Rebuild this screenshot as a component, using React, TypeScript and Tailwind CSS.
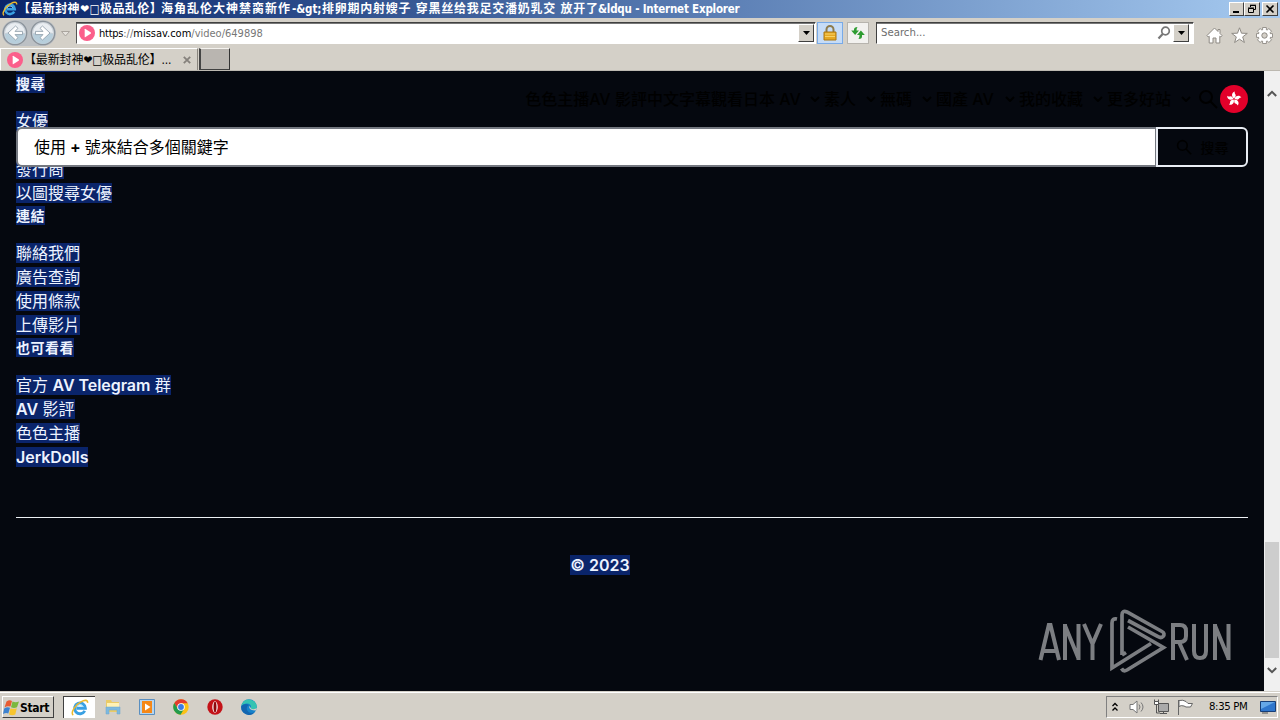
import React from 'react';

const TAHOMA = "font-['DejaVu_Sans_Condensed','DejaVu_Sans','Noto_Sans_CJK_SC',sans-serif] [font-stretch:condensed]";
const raised = 'border border-t-white border-l-white border-r-[#404040] border-b-[#404040] bg-[#d4d0c8]';

function PlayLogo() {
  return (
    <svg className="h-4 w-4 shrink-0" viewBox="0 0 16 16">
      <circle cx="8" cy="8" r="8" fill="#fb5f8b" />
      <path d="M5.7 4.2Q5.7 3.4 6.5 3.9L11.6 7.2Q12.5 8 11.6 8.7L6.5 12.1Q5.7 12.5 5.7 11.7Z" fill="#fff" />
    </svg>
  );
}

function IeLogo({ className }: { className: string }) {
  return (
    <svg className={className} viewBox="0 0 20 20">
      <path d="M15.3 13.2A6 6 0 1 1 16 10.3H6" fill="none" stroke="#3aa0e2" strokeWidth="3.2" />
      <path d="M6.3 9.2A3.9 3.9 0 0 1 13.8 9" fill="none" stroke="#8fd8fb" strokeWidth="1.1" />
      <path d="M2.5 18C-1 15.2 5 6.2 11 3.2C15 .9 18.7.7 18.4 4.3" fill="none" stroke="#edb92c" strokeWidth="1.7" />
    </svg>
  );
}

function NavCircle({ flip }: { flip?: boolean }) {
  return (
    <svg className="h-[26px] w-[26px]" viewBox="0 0 26 26">
      <circle cx="13" cy="13" r="11.7" fill="#c9d0d7" stroke="#8b939b" strokeWidth="1.3" />
      <path d="M3 13a10 10 0 0 1 20 0Q13 10 3 13" fill="#e9edf1" />
      <path d="M3 14Q13 11 23 14A10 10 0 0 1 3 14" fill="#b7cedb" />
      <path
        d={flip ? 'M5.5 11.4H13L10 8.3L12.5 6L20 13L12.5 20L10 17.7L13 14.6H5.5Z' : 'M20.5 11.4H13L16 8.3L13.5 6L6 13L13.5 20L16 17.7L13 14.6H20.5Z'}
        fill="#fff" stroke="#8c9ba7" strokeWidth=".8"
      />
    </svg>
  );
}

function DropButton() {
  return (
    <div className={`flex h-[18px] w-4 shrink-0 items-center justify-center ${raised}`}>
      <svg className="h-1 w-[7px]" viewBox="0 0 7 4"><path d="M0 0h7L3.5 4z" /></svg>
    </div>
  );
}

function TitleBar() {
  return (
    <div className="flex h-[18px] items-center bg-gradient-to-r from-[#0a246a] to-[#a6caf0] pl-[2px] pr-[2px]">
      <IeLogo className="h-4 w-4 shrink-0" />
      <div className={`flex flex-1 whitespace-nowrap text-[12px] font-bold leading-[18px] text-white ${TAHOMA}`}>
        <span className="w-[143px] tracking-[0.4px]">【最新封神❤□极品乱伦】</span>
        <span className="w-[131px] tracking-[1px]">海角乱伦大神禁脔新作</span>
        <span className="w-[30px] text-[11.5px] tracking-[-0.1px]">-&amp;gt;</span>
        <span className="w-[276px] tracking-[0.75px]">排卵期内射嫂子 穿黑丝给我足交潘奶乳交 放开了</span>
        <span className="text-[11.5px] tracking-[-0.2px]">&amp;ldqu - Internet Explorer</span>
      </div>
      <div className={`flex h-[14px] w-[15px] items-center justify-center ${raised}`}>
        <svg className="h-[10px] w-[10px]" viewBox="0 0 10 10"><path d="M1 7h6v2H1z" /></svg>
      </div>
      <div className={`flex h-[14px] w-4 items-center justify-center ${raised}`}>
        <svg className="h-[10px] w-[10px]" viewBox="0 0 10 10"><path d="M3.5 1.5h5v4h-2M3.5 1v2M3 1.2h6M1.5 4.5h5v4h-5zM1 4h6" fill="none" stroke="#000" /></svg>
      </div>
      <div className={`ml-[2px] flex h-[14px] w-4 items-center justify-center ${raised}`}>
        <svg className="h-[10px] w-[10px]" viewBox="0 0 10 10"><path d="M1.5 1.5l7 7M8.5 1.5l-7 7" stroke="#000" strokeWidth="1.6" /></svg>
      </div>
    </div>
  );
}

function AddressRow() {
  return (
    <div className="flex h-[30px] items-start pl-[2px]">
      <div className="mt-[2px] flex gap-[2px] rounded-full bg-[#bcc0c4]"><NavCircle /><NavCircle flip /></div>
      <svg className="ml-[5px] mt-[13px] h-[6px] w-[9px]" viewBox="0 0 9 6"><path d="M.5.5h8l-4 4.5z" fill="#e5e2dd" stroke="#aaa59e" /></svg>
      <div className="ml-[6px] mt-[4px] flex h-[22px] w-[740px] items-center border border-b-white border-l-[#555] border-r-white border-t-[#404040] bg-white pl-[2px] pr-[1px] shadow-[inset_0_1px_0_#777]">
        <PlayLogo />
        <div className={`flex-1 whitespace-pre pl-[4px] pt-px text-[11px] leading-[20px] text-[#777] ${TAHOMA}`}>
          <span className="tracking-[-0.25px] text-black">https</span>://<span className="text-black">missav.com</span>/video/649898
        </div>
        <DropButton />
      </div>
      <div className="ml-[1px] mt-[4px] flex h-[22px] w-[26px] items-center justify-center border border-[#78aae8] bg-[#c6dcf7]">
        <svg className="h-4 w-[14px]" viewBox="0 0 14 16">
          <path d="M3.5 8V4.5a3.5 3.5 0 0 1 7 0V8" fill="none" stroke="#8d7b4d" strokeWidth="2" />
          <path d="M1 7h12v8H1z" fill="#e5a823" stroke="#ac7610" />
          <path d="M2 9h10M2 11.5h10" stroke="#f8d266" />
        </svg>
      </div>
      <div className="ml-1 mt-[4px] flex h-[22px] w-[22px] items-center justify-center border border-[#b7b4ae] bg-[#f2f1ef]">
        <svg className="h-4 w-4" viewBox="0 0 16 16"><path d="M7.5 2Q4 2 4 4.500V5.500H1.200l3.900 4.500L9 5.500H6.500Q6.400 3.500 7.500 2Z M8.500 14Q12 14 12 11.500V10H14.800L10.900 5.500 7 10H9.500Q9.600 12.500 8.500 14Z" fill="#2e9c31" /></svg>
      </div>
      <div className="ml-[7px] mt-[4px] flex h-[22px] w-[318px] items-center border border-b-white border-l-[#404040] border-r-white border-t-[#404040] bg-white pr-[4px] shadow-[inset_0_1px_0_#777]">
        <span className={`flex-1 pl-[4px] pt-px text-[11.3px] text-[#6d6d6d] ${TAHOMA}`}>Search...</span>
        <svg className="mr-[2px] h-[14px] w-[14px]" viewBox="0 0 14 14"><circle cx="8.5" cy="5" r="3.8" fill="none" stroke="#777" strokeWidth="1.7" /><path d="M5.7 8L1.5 12.5" stroke="#777" strokeWidth="2.2" /></svg>
        <DropButton />
      </div>
      <div className="ml-[12px] mt-[9px] flex gap-[8px]">
        <svg className="h-[17px] w-[17px]" viewBox="0 0 17 17"><path d="M8.5 1L1 8.5 2.2 10 3.2 9.2V16H7V11h3v5h3.8V9.2l1 .8L16 8.5 14 6.5V2.5H12v2z" fill="#fff" stroke="#8e8a84" /></svg>
        <svg className="h-[17px] w-[17px]" viewBox="0 0 17 17"><path d="M8.5.8l2 5.4 5.8.2-4.6 3.5 1.7 5.6-4.9-3.3-4.9 3.3 1.7-5.6L.7 6.4l5.8-.2z" fill="#fff" stroke="#8e8a84" /></svg>
        <svg className="h-[17px] w-[17px]" viewBox="0 0 17 17">
          {[0, 45, 90, 135].map((a) => (
            <path key={a} transform={`rotate(${a} 8.5 8.5)`} d="M6.600.500h3.800v16H6.600z" fill="#fff" stroke="#8e8a84" strokeWidth=".9" />
          ))}
          <circle cx="8.5" cy="8.5" r="5.8" fill="#fff" />
          <circle cx="8.5" cy="8.5" r="2.700" fill="#d4d0c8" stroke="#8e8a84" />
        </svg>
      </div>
    </div>
  );
}

function TabRow() {
  return (
    <div className="flex h-[23px] border-b border-[#bcb8b0]">
      <div className="flex h-[22px] w-[198px] items-center border-l border-r border-t border-l-white border-r-[#8a867f] border-t-white pl-[6px]">
        <PlayLogo />
        <span className={`w-[150px] whitespace-nowrap pl-[1px] text-[12px] tracking-[-0.15px] ${TAHOMA}`}>【最新封神❤□极品乱伦】...</span>
        <svg className="ml-[10px] h-2 w-2" viewBox="0 0 8 8"><path d="M.8.8l6.4 6.4M7.2.8L.8 7.2" stroke="#85817c" strokeWidth="1.8" /></svg>
      </div>
      <div className="ml-[1px] h-[22px] w-[31px] border-b border-l-2 border-r border-t border-b-[#404040] border-l-[#444] border-r-[#333] border-t-[#f4f2ee] bg-[#b9b5b0]" />
    </div>
  );
}

const cjk = "font-['Inter','Noto_Sans_CJK_TC',sans-serif]";

function Heading({ children }: { children: React.ReactNode }) {
  return (
    <div className="flex h-5 items-center">
      <span className="h-[19px] bg-[#0a246a] text-[14px] font-bold leading-[19px] tracking-[0.5px]">{children}</span>
    </div>
  );
}

const latin = /([A-Za-z]+(?: [A-Za-z]+)*)/;

function Links({ items }: { items: string[] }) {
  return (
    <ul className="mt-4">
      {items.map((t, i) => (
        <li key={i} className="flex h-6 items-center">
          <span className="h-[20px] whitespace-pre bg-[#0a246a] leading-[20px]">
            {t.split(latin).map((part, k) => (
              <span key={k} className={k % 2 ? 'font-semibold tracking-[-0.05px]' : 'font-normal'}>{part}</span>
            ))}
          </span>
        </li>
      ))}
    </ul>
  );
}

function Magnifier({ className }: { className: string }) {
  return (
    <svg className={className} viewBox="0 0 20 20" fill="none" stroke="#000" strokeWidth="2"><circle cx="8" cy="8" r="6" /><path d="M12.5 12.5L19 19" /></svg>
  );
}

const menus: { label: string; width: string }[] = [
  { label: '日本 AV', width: 'w-[81px]' },
  { label: '素人', width: 'w-[56px]' },
  { label: '無碼', width: 'w-[56px]' },
  { label: '國產 AV', width: 'w-[83px]' },
  { label: '我的收藏', width: 'w-[88px]' },
  { label: '更多好站', width: 'w-[88px]' },
];

function SiteHeader() {
  return (
    <div className="absolute inset-x-0 top-0 px-4">
      <div className="flex h-14 items-center justify-end whitespace-nowrap text-black">
        <span>色色主播</span><span>AV 影評</span><span>中文字幕</span><span className="w-8">觀看</span>
        {menus.map((m) => (
          <span key={m.label} className={`flex items-center justify-between pr-[4px] ${m.width}`}>
            <span className="w-0">{m.label}</span>
            <svg className="h-[6px] w-[10px]" viewBox="0 0 10 6"><path d="M1 1l4 4 4-4" fill="none" stroke="#000" strokeWidth="2" /></svg>
          </span>
        ))}
        <Magnifier className="ml-[3px] h-5 w-5" />
        <svg className="ml-[2px] h-7 w-7" viewBox="0 0 28 28">
          <circle cx="14" cy="14" r="14" fill="#e2002a" />
          {[0, 72, 144, 216, 288].map((a) => (
            <path key={a} transform={`rotate(${a} 14 14)`} d="M14 13.4C11.3 11.8 11.200 7.500 14.900 6.500C13.800 8.500 16.600 9.500 15.500 11.400Q15 12.500 14 13.4Z" fill="#fff" />
          ))}
        </svg>
      </div>
      <div className="flex h-10">
        <div className="flex flex-1 items-center rounded-l-md border-2 border-r-[1px] border-[#747880] bg-white pl-[16px] font-normal text-black"><span className="whitespace-pre">使用<span className="font-semibold"> + </span>號來結合多個關鍵字</span></div>
        <div className="flex w-[92px] items-center justify-center gap-[9px] rounded-r-md border-2 border-[#e9edf4] bg-[#05080f] text-[14px] text-black">
          <Magnifier className="h-4 w-4" /><span>搜尋</span>
        </div>
      </div>
    </div>
  );
}

function Watermark() {
  return (
    <svg className="absolute left-[1036px] top-[536px] h-[68px] w-[200px]" viewBox="0 0 200 68" fill="none" stroke="#7c7e82" strokeWidth="4">
      <path d="M4.500 53L12.800 18h1.700L23 53M7 44h13M29 53V17M29 18.500L42.500 51.500M42.500 53V17M48 17l8.500 20L65 17M56.500 36v17" />
      <path d="M137 53V18h7q6 0 6 6v5q0 6-6 6h-7M143 35l8 18M158 17v27q0 7 6 7t6-7V17M179 53V17M179 18.500L192.500 51.500M192.500 53V17" />
      <path d="M86 48V8q0-5 5-3L126 24.500q3.500 2 1 5q-2 2-5 0L92 13.500M81 12q-5-1-5 4V61L115 36.500M92 20L127.500 40.500L91 63Q87.500 65 85.500 61.500M86 48l4-2.500" strokeWidth="3.700" />
    </svg>
  );
}

function WebPage() {
  return (
    <div className={`relative h-[620px] w-[1264px] overflow-hidden bg-[#05080f] px-4 text-[16px] font-medium text-[#edf3ff] ${cjk}`}>
      <div className="mb-[1px] h-[1px] w-16 bg-[#0a246a]" />
      <Heading>搜尋</Heading>
      <Links items={['女優', '', '發行商', '以圖搜尋女優']} />
      <Heading>連結</Heading>
      <Links items={['聯絡我們', '廣告查詢', '使用條款', '上傳影片']} />
      <Heading>也可看看</Heading>
      <Links items={['官方 AV Telegram 群', 'AV 影評', '色色主播', 'JerkDolls']} />
      <div className="mt-[48px] h-[1px] bg-[#edf0f4]" />
      <div className="mt-[35px] flex h-6 w-[1168px] items-center justify-center">
        <span className="h-5 bg-[#0a246a] font-semibold leading-[20px]">© 2023</span>
      </div>
      <SiteHeader />
      <Watermark />
    </div>
  );
}

function ScrollBar() {
  return (
    <div className="flex h-[620px] w-4 flex-col items-center bg-[#f0f0f0]">
      <svg className="mt-[19px] h-[7px] w-[10px]" viewBox="0 0 10 7"><path d="M.8 6L5 1.800 9.200 6" fill="none" stroke="#555" strokeWidth="2" /></svg>
      <div className="mt-[445px] h-[116px] w-[14px] bg-[#cdcdcd]" />
      <svg className="mt-[9px] h-[7px] w-[10px]" viewBox="0 0 10 7"><path d="M.8 1L5 5.200 9.200 1" fill="none" stroke="#555" strokeWidth="2" /></svg>
    </div>
  );
}

function TaskBar() {
  return (
    <div className={`flex h-[29px] items-start border-t border-[#d4d0c8] pl-[2px] pt-[4px] shadow-[inset_0_1px_0_#fff] ${TAHOMA}`}>
      <div className={`flex h-[22px] w-[52px] items-center ${raised}`}>
        <svg className="h-[17px] w-[17px]" viewBox="0 0 17 17">
          <path d="M3.500 2.500q3-2 5.500-.5L7.500 7.500Q4 6.500 1.500 8.500Z" fill="#e95c32" />
          <path d="M9.500 2.500q3 1.500 6.500 0L14 8.300q-3 1.300-6 0Z" fill="#7bb83d" />
          <path d="M1.200 9.500Q4 7.500 7 8.700L5.300 14.500Q3 13.500 0 15Z" fill="#3d82cf" />
          <path d="M7.500 9.200q3 1.300 6.300 0L12.300 15.500q-3 1.500-6.300 0Z" fill="#f7c52e" />
        </svg>
        <span className="pt-px text-[12px] font-bold tracking-[-0.3px]">Start</span>
      </div>
      <div className="ml-[9px] flex h-[22px] w-[32px] items-center justify-center border-l border-t border-[#404040] bg-white"><IeLogo className="h-[18px] w-[18px]" /></div>
      <svg className="ml-[10px] mt-[3px] h-4 w-4" viewBox="0 0 16 16"><path d="M1 1h5l1 2h7v10H1z" fill="#eacb68" /><path d="M2 4h12v4H2z" fill="#fff2b5" /><path d="M1 8h14v7h-3v-4H4v4H1z" fill="#7db9df" stroke="#68a6cc" strokeWidth=".5" /></svg>
      <svg className="ml-[18px] mt-[3px] h-4 w-4" viewBox="0 0 16 16"><path d="M.5.5h15v15H.5z" fill="#b6d5ef" stroke="#5a8fc0" /><path d="M3 2h10v12H3z" fill="#f58818" /><circle cx="8" cy="8" r="4.700" fill="#f58818" /><path d="M6 4.500v7L11.500 8z" fill="#fff" /></svg>
      <svg className="ml-[18px] mt-[3px] h-4 w-4" viewBox="0 0 16 16">
        <circle cx="8" cy="8" r="7.700" fill="#fbc116" />
        <path d="M1.300 4A7.700 7.700 0 0 1 14.700 4.200H8L5 10Z" fill="#e33b2e" />
        <path d="M1.300 4A7.700 7.700 0 0 0 7.500 15.700L11 10H5Z" fill="#229b4c" />
        <circle cx="8" cy="8" r="3.800" fill="#fff" /><circle cx="8" cy="8" r="2.900" fill="#3b7ce4" />
      </svg>
      <svg className="ml-[18px] mt-[3px] h-4 w-4" viewBox="0 0 16 16"><circle cx="8" cy="8" r="7.700" fill="#c41218" /><ellipse cx="8" cy="8" rx="2.700" ry="5.800" fill="#fff" /><ellipse cx="8" cy="8" rx="1.500" ry="5.300" fill="#8f080c" /></svg>
      <svg className="ml-[18px] mt-[3px] h-4 w-4" viewBox="0 0 16 16"><circle cx="8" cy="8" r="7.800" fill="#1683ca" /><path d="M1 5A7.800 7.800 0 0 1 15.800 8.500Q14.500 11 9.500 10.500Q11.500 5 6 4.500Q3 4 .3 7Z" fill="#35c3b2" /><path d="M.3 7Q4 3.500 8 6Q5 7 6 11Q8 15 13.500 13.500A7.700 7.700 0 0 1 .3 7" fill="#1266b0" /><path d="M8.500 7Q7 11 14.800 11.500Q15.500 10 15.800 9Q12 11 10 9.500Z" fill="#d4d0c8" /></svg>
      <div className="ml-auto mr-[2px] flex h-[22px] w-[172px] items-center border border-b-white border-l-[#808080] border-r-white border-t-[#808080] pl-[5px]">
        <svg className="h-[10px] w-[6px]" viewBox="0 0 6 10"><path d="M.5 4L3 1.500 5.500 4M.5 8.500L3 6l2.500 2.500" fill="none" stroke="#000" strokeWidth="1.300" /></svg>
        <svg className="ml-[11px] h-4 w-4" viewBox="0 0 16 16"><path d="M1 5.500h3L8 2v12l-4-3.500H1z" fill="#fff" stroke="#777" /><path d="M10 5.500q2 2.500 0 5M12 3.500q4 4.500 0 9" fill="none" stroke="#777" /></svg>
        <svg className="ml-[8px] h-4 w-4" viewBox="0 0 16 16"><path d="M5.500 4.500h10v8h-10z" fill="#aaa" stroke="#555" /><path d="M7 14.500h7M10.500 12v2M1.500.5v4h4v-4M3.500 4v10H7" fill="none" stroke="#555" /><path d="M1.500 2.500h4v3h-4z" fill="#fff" stroke="#555" /></svg>
        <svg className="ml-[8px] h-4 w-4" viewBox="0 0 16 16"><path d="M1.500 1v15M2 1.500q4-1 7 1l2 2h4.500L13.500 8H9L7 7Q4 6 2 7.500z" fill="#fff" stroke="#666" /></svg>
        <span className="ml-[16px] w-[40px] whitespace-nowrap pt-px text-[11.300px] tracking-[-0.35px]">8:35 PM</span>
        <svg className="ml-[11px] h-[14px] w-4" viewBox="0 0 16 14"><path d="M.5 1.500h15v10H.5z" fill="#2f76cc" stroke="#173e77" /><path d="M1 2h14L1 9z" fill="#65a7e7" /><path d="M2 13h6" stroke="#555" /></svg>
      </div>
    </div>
  );
}

export default function App() {
  return (
    <div className="flex h-[720px] w-[1280px] flex-col overflow-hidden bg-[#d4d0c8] text-black">
      <TitleBar />
      <AddressRow />
      <TabRow />
      <div className="flex"><WebPage /><ScrollBar /></div>
      <TaskBar />
    </div>
  );
}
